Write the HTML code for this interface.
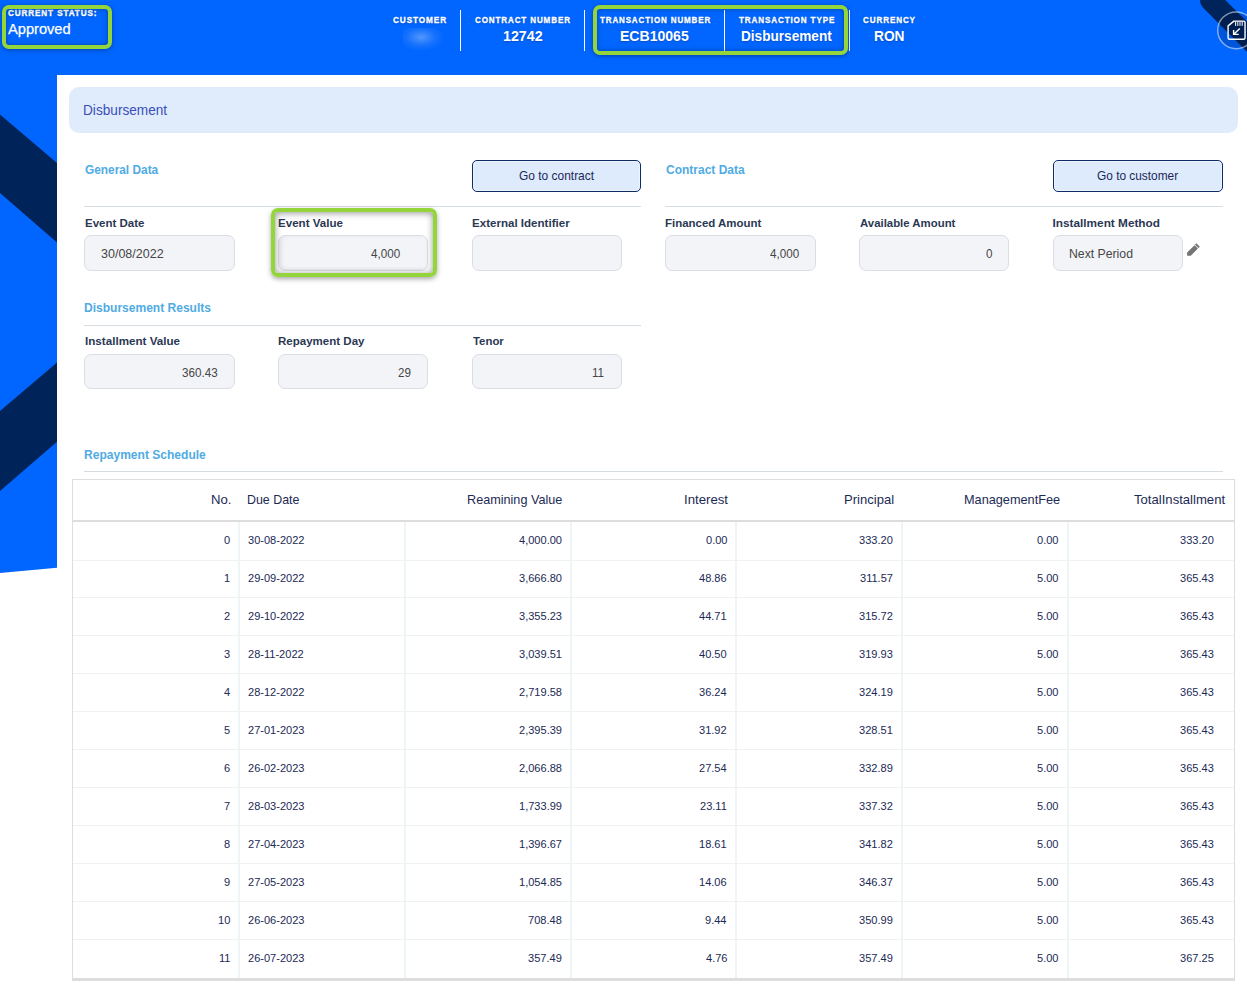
<!DOCTYPE html>
<html><head><meta charset="utf-8"><style>
html,body{margin:0;padding:0;width:1247px;height:990px;overflow:hidden;background:#fff;}
body{position:relative;font-family:"Liberation Sans",sans-serif;}
.t{position:absolute;white-space:nowrap;line-height:1;transform-origin:0 0;}
.r{position:absolute;}
.bg{position:absolute;left:0;top:0;}
</style></head><body>
<svg class="bg" width="1247" height="990" viewBox="0 0 1247 990">
<polygon points="0,0 1247,0 1247,75 57,75 57,567.8 0,573.1" fill="#0066FF"/>
<polygon points="0,114.4 57,162.9 57,242.4 0,193" fill="#00245A"/>
<polygon points="0,411 57,362.6 57,441.8 0,491" fill="#00245A"/>
<line x1="1210.8" y1="0.55" x2="1320" y2="109.75" stroke="#00245A" stroke-width="21.2" stroke-linecap="round"/>
</svg>
<div class="t" style="left:8.17px;top:10.00px;font-size:8.20px;color:#FFFFFF;font-weight:bold;letter-spacing:0.9px;transform:scaleX(0.9925);-webkit-text-stroke:0.35px #fff;text-shadow:0 1px 2px rgba(0,0,40,0.3);">CURRENT STATUS:</div>
<div class="t" style="left:8.26px;top:22.00px;font-size:14.20px;color:#FFFFFF;transform:scaleX(1.0309);-webkit-text-stroke:0.25px #fff;">Approved</div>
<div class="t" style="left:392.97px;top:16.00px;font-size:8.40px;color:#FFFFFF;font-weight:bold;letter-spacing:0.9px;transform:scaleX(0.9814);-webkit-text-stroke:0.3px #fff;text-shadow:0 1px 2px rgba(0,0,40,0.3);">CUSTOMER</div>
<div class="t" style="left:474.98px;top:16.00px;font-size:8.40px;color:#FFFFFF;font-weight:bold;letter-spacing:0.9px;transform:scaleX(0.9623);-webkit-text-stroke:0.3px #fff;text-shadow:0 1px 2px rgba(0,0,40,0.3);">CONTRACT NUMBER</div>
<div class="t" style="left:599.62px;top:16.00px;font-size:8.40px;color:#FFFFFF;font-weight:bold;letter-spacing:0.9px;transform:scaleX(0.9552);-webkit-text-stroke:0.3px #fff;text-shadow:0 1px 2px rgba(0,0,40,0.3);">TRANSACTION NUMBER</div>
<div class="t" style="left:739.22px;top:16.00px;font-size:8.40px;color:#FFFFFF;font-weight:bold;letter-spacing:0.9px;transform:scaleX(0.9666);-webkit-text-stroke:0.3px #fff;text-shadow:0 1px 2px rgba(0,0,40,0.3);">TRANSACTION TYPE</div>
<div class="t" style="left:862.97px;top:16.00px;font-size:8.40px;color:#FFFFFF;font-weight:bold;letter-spacing:0.9px;transform:scaleX(0.9677);-webkit-text-stroke:0.3px #fff;text-shadow:0 1px 2px rgba(0,0,40,0.3);">CURRENCY</div>
<div class="t" style="left:502.91px;top:29.00px;font-size:14.80px;color:#FFFFFF;font-weight:bold;transform:scaleX(0.9631);text-shadow:0 1px 2px rgba(0,0,40,0.25);">12742</div>
<div class="t" style="left:620.15px;top:29.00px;font-size:14.80px;color:#FFFFFF;font-weight:bold;transform:scaleX(0.9498);text-shadow:0 1px 2px rgba(0,0,40,0.25);">ECB10065</div>
<div class="t" style="left:741.18px;top:29.00px;font-size:14.80px;color:#FFFFFF;font-weight:bold;transform:scaleX(0.9200);text-shadow:0 1px 2px rgba(0,0,40,0.25);">Disbursement</div>
<div class="t" style="left:874.37px;top:29.00px;font-size:14.80px;color:#FFFFFF;font-weight:bold;transform:scaleX(0.9290);text-shadow:0 1px 2px rgba(0,0,40,0.25);">RON</div>
<div class="r" style="left:459.80px;top:10.00px;width:1.20px;height:41.00px;background:#FFFFFF;"></div>
<div class="r" style="left:584.10px;top:10.00px;width:1.20px;height:41.00px;background:#FFFFFF;"></div>
<div class="r" style="left:724.10px;top:10.00px;width:1.20px;height:41.00px;background:#FFFFFF;"></div>
<div class="r" style="left:848.50px;top:10.00px;width:1.20px;height:41.00px;background:#FFFFFF;"></div>
<div class="r" style="left:403.00px;top:28.00px;width:43.00px;height:23.00px;background:radial-gradient(ellipse 55% 60% at 42% 40%, rgba(150,190,250,0.55), rgba(90,150,250,0.25) 60%, rgba(0,102,255,0) 100%);"></div>
<svg class="bg" width="1247" height="80" viewBox="0 0 1247 80">
<circle cx="1236.1" cy="30.3" r="18.4" fill="rgba(0,0,30,0.16)" stroke="rgba(255,255,255,0.5)" stroke-width="1.5"/>
<path d="M1228.1,25.9 L1228.1,37.8 Q1228.1,39.3 1229.6,39.3 L1243.55,39.3 Q1245.05,39.3 1245.05,37.8 L1245.05,22.6 Q1245.05,21.1 1243.55,21.1 L1233.9,21.1 Z" fill="none" stroke="#fff" stroke-width="1.4" stroke-linejoin="round"/>
<path d="M1235.6,21.5 V25.9 M1237.8,21.5 V25.9 M1240,21.5 V25.9 M1242.2,21.5 V25.9" stroke="#fff" stroke-width="1"/>
<path d="M1239.8,28.4 L1233.8,34.2 M1233.6,29.9 V34.4 H1238.7" fill="none" stroke="#fff" stroke-width="1.4"/>
</svg>
<div class="r" style="left:2.00px;top:4.50px;width:110.40px;height:44.00px;border:4px solid #93D53A;border-radius:7px;box-sizing:border-box;box-shadow:0 1px 4px rgba(0,0,0,0.35), inset 0 0 5px rgba(0,0,0,0.35);"></div>
<div class="r" style="left:592.60px;top:4.50px;width:255.90px;height:50.50px;border:4px solid #93D53A;border-radius:7px;box-sizing:border-box;box-shadow:0 1px 4px rgba(0,0,0,0.35), inset 0 0 5px rgba(0,0,0,0.35);"></div>
<div class="r" style="left:57.00px;top:75.00px;width:1190.00px;height:915.00px;background:#FFFFFF;"></div>
<div class="r" style="left:69.00px;top:87.00px;width:1169.00px;height:46.00px;background:#E0ECFC;border-radius:10px;"></div>
<div class="t" style="left:82.57px;top:103.00px;font-size:14.40px;color:#3A4EBA;transform:scaleX(0.9480);">Disbursement</div>
<div class="t" style="left:84.73px;top:163.00px;font-size:13.60px;color:#4FABE3;font-weight:bold;transform:scaleX(0.8725);">General Data</div>
<div class="t" style="left:665.72px;top:163.00px;font-size:13.60px;color:#4FABE3;font-weight:bold;transform:scaleX(0.8827);">Contract Data</div>
<div class="t" style="left:84.49px;top:301.00px;font-size:13.60px;color:#4FABE3;font-weight:bold;transform:scaleX(0.8845);">Disbursement Results</div>
<div class="t" style="left:84.49px;top:448.00px;font-size:13.60px;color:#4FABE3;font-weight:bold;transform:scaleX(0.8857);">Repayment Schedule</div>
<div class="r" style="left:84.00px;top:206.00px;width:557.00px;height:1.00px;background:#D6DDE2;"></div>
<div class="r" style="left:665.00px;top:206.00px;width:558.00px;height:1.00px;background:#D6DDE2;"></div>
<div class="r" style="left:84.00px;top:325.00px;width:557.00px;height:1.00px;background:#D6DDE2;"></div>
<div class="r" style="left:84.00px;top:471.00px;width:1139.00px;height:1.00px;background:#D6DDE2;"></div>
<div class="r" style="left:472.00px;top:160.00px;width:169.00px;height:32.00px;background:#DEEBFD;border:1.4px solid #0D2B66;border-radius:5px;box-sizing:border-box;box-shadow:inset 0 0 0 1px #EEF5FF;"></div>
<div class="r" style="left:1053.00px;top:160.00px;width:170.00px;height:32.00px;background:#DEEBFD;border:1.4px solid #0D2B66;border-radius:5px;box-sizing:border-box;box-shadow:inset 0 0 0 1px #EEF5FF;"></div>
<div class="t" style="left:519.00px;top:170.00px;font-size:12.60px;color:#1B2857;transform:scaleX(0.9489);">Go to contract</div>
<div class="t" style="left:1097.01px;top:170.00px;font-size:12.60px;color:#1B2857;transform:scaleX(0.9425);">Go to customer</div>
<div class="t" style="left:84.52px;top:218.00px;font-size:11.80px;color:#2B3853;font-weight:bold;transform:scaleX(0.9750);">Event Date</div>
<div class="t" style="left:277.92px;top:218.00px;font-size:11.80px;color:#2B3853;font-weight:bold;transform:scaleX(0.9824);">Event Value</div>
<div class="t" style="left:471.52px;top:218.00px;font-size:11.80px;color:#2B3853;font-weight:bold;transform:scaleX(0.9797);">External Identifier</div>
<div class="t" style="left:665.43px;top:218.00px;font-size:11.80px;color:#2B3853;font-weight:bold;transform:scaleX(0.9719);">Financed Amount</div>
<div class="t" style="left:859.72px;top:218.00px;font-size:11.80px;color:#2B3853;font-weight:bold;transform:scaleX(0.9659);">Available Amount</div>
<div class="t" style="left:1052.51px;top:218.00px;font-size:11.80px;color:#2B3853;font-weight:bold;">Installment Method</div>
<div class="t" style="left:84.51px;top:336.00px;font-size:11.80px;color:#2B3853;font-weight:bold;transform:scaleX(0.9864);">Installment Value</div>
<div class="t" style="left:277.52px;top:336.00px;font-size:11.80px;color:#2B3853;font-weight:bold;transform:scaleX(0.9775);">Repayment Day</div>
<div class="t" style="left:472.59px;top:336.00px;font-size:11.80px;color:#2B3853;font-weight:bold;transform:scaleX(0.9645);">Tenor</div>
<div class="r" style="left:84.00px;top:235.00px;width:151.00px;height:36.00px;background:#F3F4F8;border:1px solid #DADDE4;border-radius:7px;box-sizing:border-box;"></div>
<div class="r" style="left:278.00px;top:235.00px;width:150.30px;height:36.00px;background:#F3F4F8;border:1px solid #DADDE4;border-radius:7px;box-sizing:border-box;box-shadow:inset 3px 0 4px rgba(0,0,0,0.05);"></div>
<div class="r" style="left:472.00px;top:235.00px;width:150.00px;height:36.00px;background:#F3F4F8;border:1px solid #DADDE4;border-radius:7px;box-sizing:border-box;"></div>
<div class="r" style="left:665.00px;top:235.00px;width:151.00px;height:36.00px;background:#F3F4F8;border:1px solid #DADDE4;border-radius:7px;box-sizing:border-box;"></div>
<div class="r" style="left:859.00px;top:235.00px;width:150.00px;height:36.00px;background:#F3F4F8;border:1px solid #DADDE4;border-radius:7px;box-sizing:border-box;"></div>
<div class="r" style="left:1053.00px;top:235.00px;width:130.00px;height:36.00px;background:#F3F4F8;border:1px solid #DADDE4;border-radius:7px;box-sizing:border-box;"></div>
<div class="r" style="left:84.00px;top:354.00px;width:151.00px;height:35.00px;background:#F3F4F8;border:1px solid #DADDE4;border-radius:7px;box-sizing:border-box;"></div>
<div class="r" style="left:278.00px;top:354.00px;width:150.30px;height:35.00px;background:#F3F4F8;border:1px solid #DADDE4;border-radius:7px;box-sizing:border-box;"></div>
<div class="r" style="left:472.00px;top:354.00px;width:150.00px;height:35.00px;background:#F3F4F8;border:1px solid #DADDE4;border-radius:7px;box-sizing:border-box;"></div>
<div class="t" style="left:101.33px;top:247.00px;font-size:13.40px;color:#464646;transform:scaleX(0.9348);">30/08/2022</div>
<div class="t" style="left:370.86px;top:247.00px;font-size:13.40px;color:#464646;transform:scaleX(0.8700);">4,000</div>
<div class="t" style="left:769.96px;top:247.00px;font-size:13.40px;color:#464646;transform:scaleX(0.8700);">4,000</div>
<div class="t" style="left:985.97px;top:247.00px;font-size:13.40px;color:#464646;transform:scaleX(0.8700);">0</div>
<div class="t" style="left:1069.49px;top:247.00px;font-size:13.40px;color:#464646;transform:scaleX(0.9142);">Next Period</div>
<div class="t" style="left:182.05px;top:366.00px;font-size:13.40px;color:#464646;transform:scaleX(0.8700);">360.43</div>
<div class="t" style="left:398.08px;top:366.00px;font-size:13.40px;color:#464646;transform:scaleX(0.8700);">29</div>
<div class="t" style="left:592.46px;top:366.00px;font-size:13.40px;color:#464646;transform:scaleX(0.8700);">11</div>
<div class="r" style="left:270.70px;top:208.30px;width:165.90px;height:69.10px;border:4px solid #93D53A;border-radius:7px;box-sizing:border-box;box-shadow:0 2px 5px rgba(0,0,0,0.35), inset 0 1px 7px rgba(0,0,0,0.42);"></div>
<svg class="bg" width="1247" height="300" viewBox="0 0 1247 300">
<path d="M1187.1,252.5 L1194.5,245.13 L1197.92,248.54 L1190.8,255.7 L1187.1,255.7 Z" fill="#757575"/>
<path d="M1195.24,244.67 L1196.35,243.55 L1199.5,246.7 L1198.39,247.82 Z" fill="#757575" stroke="#757575" stroke-width="0.6" stroke-linejoin="round"/>
</svg>
<div class="r" style="left:72.00px;top:479.00px;width:1163.00px;height:502.00px;border:1px solid #DDDDDD;border-bottom:3px solid #DDDDDD;box-sizing:border-box;background:#fff;"></div>
<div class="r" style="left:73.00px;top:520.00px;width:1161.00px;height:2.00px;background:#DDDDDD;"></div>
<div class="r" style="left:238.00px;top:522.00px;width:2.00px;height:456.00px;background:#EDF5F9;"></div>
<div class="r" style="left:403.80px;top:522.00px;width:2.00px;height:456.00px;background:#EDF5F9;"></div>
<div class="r" style="left:569.60px;top:522.00px;width:2.00px;height:456.00px;background:#EDF5F9;"></div>
<div class="r" style="left:735.40px;top:522.00px;width:2.00px;height:456.00px;background:#EDF5F9;"></div>
<div class="r" style="left:901.20px;top:522.00px;width:2.00px;height:456.00px;background:#EDF5F9;"></div>
<div class="r" style="left:1067.00px;top:522.00px;width:2.00px;height:456.00px;background:#EDF5F9;"></div>
<div class="r" style="left:73.00px;top:560.00px;width:1161.00px;height:1.00px;background:#F1F1F1;"></div>
<div class="r" style="left:73.00px;top:597.00px;width:1161.00px;height:1.00px;background:#F1F1F1;"></div>
<div class="r" style="left:73.00px;top:635.00px;width:1161.00px;height:1.00px;background:#F1F1F1;"></div>
<div class="r" style="left:73.00px;top:673.00px;width:1161.00px;height:1.00px;background:#F1F1F1;"></div>
<div class="r" style="left:73.00px;top:711.00px;width:1161.00px;height:1.00px;background:#F1F1F1;"></div>
<div class="r" style="left:73.00px;top:749.00px;width:1161.00px;height:1.00px;background:#F1F1F1;"></div>
<div class="r" style="left:73.00px;top:787.00px;width:1161.00px;height:1.00px;background:#F1F1F1;"></div>
<div class="r" style="left:73.00px;top:825.00px;width:1161.00px;height:1.00px;background:#F1F1F1;"></div>
<div class="r" style="left:73.00px;top:863.00px;width:1161.00px;height:1.00px;background:#F1F1F1;"></div>
<div class="r" style="left:73.00px;top:901.00px;width:1161.00px;height:1.00px;background:#F1F1F1;"></div>
<div class="r" style="left:73.00px;top:939.00px;width:1161.00px;height:1.00px;background:#F1F1F1;"></div>
<div class="t" style="left:211.11px;top:493.00px;font-size:13.00px;color:#1C2A55;transform:scaleX(1.0127);">No.</div>
<div class="t" style="left:246.98px;top:493.00px;font-size:13.00px;color:#1C2A55;transform:scaleX(0.9537);">Due Date</div>
<div class="t" style="left:467.26px;top:493.00px;font-size:13.00px;color:#1C2A55;transform:scaleX(0.9720);">Reamining Value</div>
<div class="t" style="left:684.08px;top:493.00px;font-size:13.00px;color:#1C2A55;transform:scaleX(1.0153);">Interest</div>
<div class="t" style="left:844.02px;top:493.00px;font-size:13.00px;color:#1C2A55;transform:scaleX(1.0041);">Principal</div>
<div class="t" style="left:963.75px;top:493.00px;font-size:13.00px;color:#1C2A55;transform:scaleX(0.9777);">ManagementFee</div>
<div class="t" style="left:1134.00px;top:493.00px;font-size:13.00px;color:#1C2A55;transform:scaleX(1.0086);">TotalInstallment</div>
<div class="t" style="left:223.88px;top:535.00px;font-size:11.40px;color:#1B2A55;transform:scaleX(0.9700);">0</div>
<div class="t" style="left:247.79px;top:535.00px;font-size:11.40px;color:#1B2A55;transform:scaleX(0.9700);">30-08-2022</div>
<div class="t" style="left:518.57px;top:535.00px;font-size:11.40px;color:#1B2A55;transform:scaleX(0.9700);">4,000.00</div>
<div class="t" style="left:705.51px;top:535.00px;font-size:11.40px;color:#1B2A55;transform:scaleX(0.9700);">0.00</div>
<div class="t" style="left:859.30px;top:535.00px;font-size:11.40px;color:#1B2A55;transform:scaleX(0.9700);">333.20</div>
<div class="t" style="left:1037.21px;top:535.00px;font-size:11.40px;color:#1B2A55;transform:scaleX(0.9700);">0.00</div>
<div class="t" style="left:1179.90px;top:535.00px;font-size:11.40px;color:#1B2A55;transform:scaleX(0.9700);">333.20</div>
<div class="t" style="left:223.99px;top:573.00px;font-size:11.40px;color:#1B2A55;transform:scaleX(0.9700);">1</div>
<div class="t" style="left:247.65px;top:573.00px;font-size:11.40px;color:#1B2A55;transform:scaleX(0.9700);">29-09-2022</div>
<div class="t" style="left:518.57px;top:573.00px;font-size:11.40px;color:#1B2A55;transform:scaleX(0.9700);">3,666.80</div>
<div class="t" style="left:699.40px;top:573.00px;font-size:11.40px;color:#1B2A55;transform:scaleX(0.9700);">48.86</div>
<div class="t" style="left:860.27px;top:573.00px;font-size:11.40px;color:#1B2A55;transform:scaleX(0.9700);">311.57</div>
<div class="t" style="left:1037.21px;top:573.00px;font-size:11.40px;color:#1B2A55;transform:scaleX(0.9700);">5.00</div>
<div class="t" style="left:1179.96px;top:573.00px;font-size:11.40px;color:#1B2A55;transform:scaleX(0.9700);">365.43</div>
<div class="t" style="left:224.02px;top:611.00px;font-size:11.40px;color:#1B2A55;transform:scaleX(0.9700);">2</div>
<div class="t" style="left:247.65px;top:611.00px;font-size:11.40px;color:#1B2A55;transform:scaleX(0.9700);">29-10-2022</div>
<div class="t" style="left:518.63px;top:611.00px;font-size:11.40px;color:#1B2A55;transform:scaleX(0.9700);">3,355.23</div>
<div class="t" style="left:699.45px;top:611.00px;font-size:11.40px;color:#1B2A55;transform:scaleX(0.9700);">44.71</div>
<div class="t" style="left:859.44px;top:611.00px;font-size:11.40px;color:#1B2A55;transform:scaleX(0.9700);">315.72</div>
<div class="t" style="left:1037.21px;top:611.00px;font-size:11.40px;color:#1B2A55;transform:scaleX(0.9700);">5.00</div>
<div class="t" style="left:1179.96px;top:611.00px;font-size:11.40px;color:#1B2A55;transform:scaleX(0.9700);">365.43</div>
<div class="t" style="left:223.93px;top:649.00px;font-size:11.40px;color:#1B2A55;transform:scaleX(0.9700);">3</div>
<div class="t" style="left:247.65px;top:649.00px;font-size:11.40px;color:#1B2A55;transform:scaleX(0.9700);">28-11-2022</div>
<div class="t" style="left:518.68px;top:649.00px;font-size:11.40px;color:#1B2A55;transform:scaleX(0.9700);">3,039.51</div>
<div class="t" style="left:699.34px;top:649.00px;font-size:11.40px;color:#1B2A55;transform:scaleX(0.9700);">40.50</div>
<div class="t" style="left:859.36px;top:649.00px;font-size:11.40px;color:#1B2A55;transform:scaleX(0.9700);">319.93</div>
<div class="t" style="left:1037.21px;top:649.00px;font-size:11.40px;color:#1B2A55;transform:scaleX(0.9700);">5.00</div>
<div class="t" style="left:1179.96px;top:649.00px;font-size:11.40px;color:#1B2A55;transform:scaleX(0.9700);">365.43</div>
<div class="t" style="left:223.77px;top:687.00px;font-size:11.40px;color:#1B2A55;transform:scaleX(0.9700);">4</div>
<div class="t" style="left:247.65px;top:687.00px;font-size:11.40px;color:#1B2A55;transform:scaleX(0.9700);">28-12-2022</div>
<div class="t" style="left:518.63px;top:687.00px;font-size:11.40px;color:#1B2A55;transform:scaleX(0.9700);">2,719.58</div>
<div class="t" style="left:699.23px;top:687.00px;font-size:11.40px;color:#1B2A55;transform:scaleX(0.9700);">36.24</div>
<div class="t" style="left:859.39px;top:687.00px;font-size:11.40px;color:#1B2A55;transform:scaleX(0.9700);">324.19</div>
<div class="t" style="left:1037.21px;top:687.00px;font-size:11.40px;color:#1B2A55;transform:scaleX(0.9700);">5.00</div>
<div class="t" style="left:1179.96px;top:687.00px;font-size:11.40px;color:#1B2A55;transform:scaleX(0.9700);">365.43</div>
<div class="t" style="left:223.91px;top:725.00px;font-size:11.40px;color:#1B2A55;transform:scaleX(0.9700);">5</div>
<div class="t" style="left:247.65px;top:725.00px;font-size:11.40px;color:#1B2A55;transform:scaleX(0.9700);">27-01-2023</div>
<div class="t" style="left:518.65px;top:725.00px;font-size:11.40px;color:#1B2A55;transform:scaleX(0.9700);">2,395.39</div>
<div class="t" style="left:699.48px;top:725.00px;font-size:11.40px;color:#1B2A55;transform:scaleX(0.9700);">31.92</div>
<div class="t" style="left:859.42px;top:725.00px;font-size:11.40px;color:#1B2A55;transform:scaleX(0.9700);">328.51</div>
<div class="t" style="left:1037.21px;top:725.00px;font-size:11.40px;color:#1B2A55;transform:scaleX(0.9700);">5.00</div>
<div class="t" style="left:1179.96px;top:725.00px;font-size:11.40px;color:#1B2A55;transform:scaleX(0.9700);">365.43</div>
<div class="t" style="left:223.93px;top:763.00px;font-size:11.40px;color:#1B2A55;transform:scaleX(0.9700);">6</div>
<div class="t" style="left:247.65px;top:763.00px;font-size:11.40px;color:#1B2A55;transform:scaleX(0.9700);">26-02-2023</div>
<div class="t" style="left:518.63px;top:763.00px;font-size:11.40px;color:#1B2A55;transform:scaleX(0.9700);">2,066.88</div>
<div class="t" style="left:699.23px;top:763.00px;font-size:11.40px;color:#1B2A55;transform:scaleX(0.9700);">27.54</div>
<div class="t" style="left:859.39px;top:763.00px;font-size:11.40px;color:#1B2A55;transform:scaleX(0.9700);">332.89</div>
<div class="t" style="left:1037.21px;top:763.00px;font-size:11.40px;color:#1B2A55;transform:scaleX(0.9700);">5.00</div>
<div class="t" style="left:1179.96px;top:763.00px;font-size:11.40px;color:#1B2A55;transform:scaleX(0.9700);">365.43</div>
<div class="t" style="left:224.02px;top:801.00px;font-size:11.40px;color:#1B2A55;transform:scaleX(0.9700);">7</div>
<div class="t" style="left:247.65px;top:801.00px;font-size:11.40px;color:#1B2A55;transform:scaleX(0.9700);">28-03-2023</div>
<div class="t" style="left:518.65px;top:801.00px;font-size:11.40px;color:#1B2A55;transform:scaleX(0.9700);">1,733.99</div>
<div class="t" style="left:700.28px;top:801.00px;font-size:11.40px;color:#1B2A55;transform:scaleX(0.9700);">23.11</div>
<div class="t" style="left:859.44px;top:801.00px;font-size:11.40px;color:#1B2A55;transform:scaleX(0.9700);">337.32</div>
<div class="t" style="left:1037.21px;top:801.00px;font-size:11.40px;color:#1B2A55;transform:scaleX(0.9700);">5.00</div>
<div class="t" style="left:1179.96px;top:801.00px;font-size:11.40px;color:#1B2A55;transform:scaleX(0.9700);">365.43</div>
<div class="t" style="left:223.93px;top:839.00px;font-size:11.40px;color:#1B2A55;transform:scaleX(0.9700);">8</div>
<div class="t" style="left:247.65px;top:839.00px;font-size:11.40px;color:#1B2A55;transform:scaleX(0.9700);">27-04-2023</div>
<div class="t" style="left:518.71px;top:839.00px;font-size:11.40px;color:#1B2A55;transform:scaleX(0.9700);">1,396.67</div>
<div class="t" style="left:699.45px;top:839.00px;font-size:11.40px;color:#1B2A55;transform:scaleX(0.9700);">18.61</div>
<div class="t" style="left:859.44px;top:839.00px;font-size:11.40px;color:#1B2A55;transform:scaleX(0.9700);">341.82</div>
<div class="t" style="left:1037.21px;top:839.00px;font-size:11.40px;color:#1B2A55;transform:scaleX(0.9700);">5.00</div>
<div class="t" style="left:1179.96px;top:839.00px;font-size:11.40px;color:#1B2A55;transform:scaleX(0.9700);">365.43</div>
<div class="t" style="left:223.96px;top:877.00px;font-size:11.40px;color:#1B2A55;transform:scaleX(0.9700);">9</div>
<div class="t" style="left:247.65px;top:877.00px;font-size:11.40px;color:#1B2A55;transform:scaleX(0.9700);">27-05-2023</div>
<div class="t" style="left:518.60px;top:877.00px;font-size:11.40px;color:#1B2A55;transform:scaleX(0.9700);">1,054.85</div>
<div class="t" style="left:699.40px;top:877.00px;font-size:11.40px;color:#1B2A55;transform:scaleX(0.9700);">14.06</div>
<div class="t" style="left:859.44px;top:877.00px;font-size:11.40px;color:#1B2A55;transform:scaleX(0.9700);">346.37</div>
<div class="t" style="left:1037.21px;top:877.00px;font-size:11.40px;color:#1B2A55;transform:scaleX(0.9700);">5.00</div>
<div class="t" style="left:1179.96px;top:877.00px;font-size:11.40px;color:#1B2A55;transform:scaleX(0.9700);">365.43</div>
<div class="t" style="left:217.74px;top:915.00px;font-size:11.40px;color:#1B2A55;transform:scaleX(0.9700);">10</div>
<div class="t" style="left:247.65px;top:915.00px;font-size:11.40px;color:#1B2A55;transform:scaleX(0.9700);">26-06-2023</div>
<div class="t" style="left:527.86px;top:915.00px;font-size:11.40px;color:#1B2A55;transform:scaleX(0.9700);">708.48</div>
<div class="t" style="left:705.40px;top:915.00px;font-size:11.40px;color:#1B2A55;transform:scaleX(0.9700);">9.44</div>
<div class="t" style="left:859.39px;top:915.00px;font-size:11.40px;color:#1B2A55;transform:scaleX(0.9700);">350.99</div>
<div class="t" style="left:1037.21px;top:915.00px;font-size:11.40px;color:#1B2A55;transform:scaleX(0.9700);">5.00</div>
<div class="t" style="left:1179.96px;top:915.00px;font-size:11.40px;color:#1B2A55;transform:scaleX(0.9700);">365.43</div>
<div class="t" style="left:218.65px;top:953.00px;font-size:11.40px;color:#1B2A55;transform:scaleX(0.9700);">11</div>
<div class="t" style="left:247.65px;top:953.00px;font-size:11.40px;color:#1B2A55;transform:scaleX(0.9700);">26-07-2023</div>
<div class="t" style="left:527.89px;top:953.00px;font-size:11.40px;color:#1B2A55;transform:scaleX(0.9700);">357.49</div>
<div class="t" style="left:705.56px;top:953.00px;font-size:11.40px;color:#1B2A55;transform:scaleX(0.9700);">4.76</div>
<div class="t" style="left:859.39px;top:953.00px;font-size:11.40px;color:#1B2A55;transform:scaleX(0.9700);">357.49</div>
<div class="t" style="left:1037.21px;top:953.00px;font-size:11.40px;color:#1B2A55;transform:scaleX(0.9700);">5.00</div>
<div class="t" style="left:1179.93px;top:953.00px;font-size:11.40px;color:#1B2A55;transform:scaleX(0.9700);">367.25</div>
</body></html>
